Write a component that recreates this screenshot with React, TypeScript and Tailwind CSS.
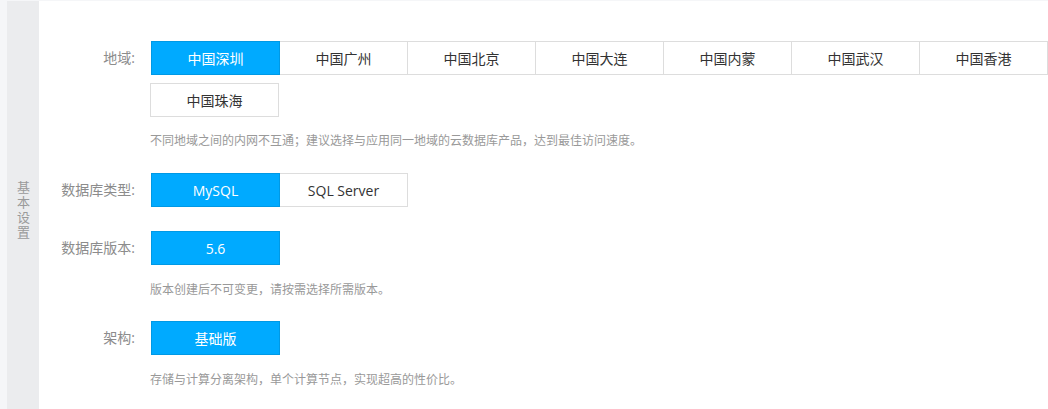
import React from "react";

const font = { fontFamily: '"Open Sans", "Noto Sans CJK SC", "Noto Sans", sans-serif' };

function Btn({ label, selected, first }: { label: string; selected?: boolean; first?: boolean }) {
  return (
    <div
      className={
        "relative flex h-[34px] w-[129px] shrink-0 items-center justify-center border text-[14px] " +
        (first ? "" : "-ml-px ") +
        (selected
          ? "z-10 border-[#0099e5] bg-[#00aaff] text-white"
          : "border-[#dddddd] bg-white text-[#333333]")
      }
    >
      {label}
    </div>
  );
}

function Label({ text }: { text: string }) {
  return (
    <div className="h-[34px] w-[112px] shrink-0 pr-[16px] text-right text-[14px] leading-[34px] text-[#8c8c8c]">
      {text}
    </div>
  );
}

function Hint({ text, className }: { text: string; className?: string }) {
  return <div className={"text-[12px] leading-[18px] text-[#999999] " + (className || "")}>{text}</div>;
}

export default function App() {
  const regions = ["中国深圳", "中国广州", "中国北京", "中国大连", "中国内蒙", "中国武汉", "中国香港"];
  return (
    <div className="flex h-[409px] w-full overflow-hidden bg-[#f5f6f8] pt-px" style={font}>
      <div className="w-[7px] shrink-0" />
      <div className="flex w-[32px] shrink-0 items-center justify-center bg-[#ebecee] pt-[12px]">
        <div className="text-[13px] leading-[16px] tracking-[2px] text-[#9a9a9a] [writing-mode:vertical-rl]">
          基本设置
        </div>
      </div>
      <div className="min-w-0 flex-1 overflow-hidden bg-white pt-[40px]">
        {/* 地域 */}
        <div className="flex">
          <Label text="地域:" />
          <div className="min-w-0 flex-1">
            <div className="flex">
              {regions.map((r, i) => (
                <Btn key={r} label={r} selected={i === 0} first={i === 0} />
              ))}
            </div>
            <div className="mt-[8px] flex">
              <div className="-ml-px flex">
                <Btn label="中国珠海" first />
              </div>
            </div>
            <Hint
              className="-ml-px mt-[15px]"
              text="不同地域之间的内网不互通；建议选择与应用同一地域的云数据库产品，达到最佳访问速度。"
            />
          </div>
        </div>

        {/* 数据库类型 */}
        <div className="mt-[23px] flex">
          <Label text="数据库类型:" />
          <div className="flex">
            <Btn label="MySQL" selected first />
            <Btn label="SQL Server" />
          </div>
        </div>

        {/* 数据库版本 */}
        <div className="mt-[24px] flex">
          <Label text="数据库版本:" />
          <div>
            <div className="flex">
              <Btn label="5.6" selected first />
            </div>
            <Hint className="-ml-px mt-[16px]" text="版本创建后不可变更，请按需选择所需版本。" />
          </div>
        </div>

        {/* 架构 */}
        <div className="mt-[22px] flex">
          <Label text="架构:" />
          <div>
            <div className="flex">
              <Btn label="基础版" selected first />
            </div>
            <Hint className="-ml-px mt-[16px]" text="存储与计算分离架构，单个计算节点，实现超高的性价比。" />
          </div>
        </div>
      </div>
    </div>
  );
}
